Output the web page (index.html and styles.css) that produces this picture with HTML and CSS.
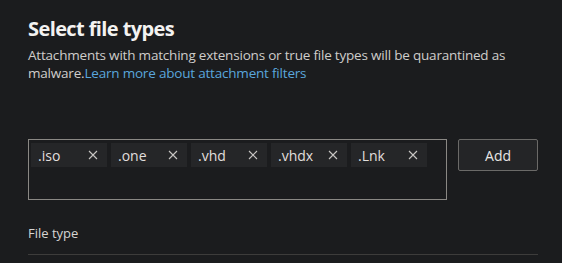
FILE: index.html
```html
<!DOCTYPE html>
<html lang="en">
<head>
    <meta charset="UTF-8">
    <meta name="viewport" content="width=device-width, initial-scale=1.0">
    <title>Select file types</title>
    <link rel="stylesheet" href="styles.css">
</head>
<body>

<main class='panel'>
    <h1 class='title'>Select file types</h1>
    <p class='desc'>Attachments with matching extensions or true file types will be quarantined as malware.<a href='#' class='link'>Learn more about attachment filters</a></p>

    <div class='picker'>
        <div class='tagbox'>
            <span class='tag'><span class='tag-text'>.iso</span><span class='tag-x'><svg viewBox='0 0 10 10'><path d='M1 1L9 9M9 1L1 9'/></svg></span></span>
            <span class='tag'><span class='tag-text'>.one</span><span class='tag-x'><svg viewBox='0 0 10 10'><path d='M1 1L9 9M9 1L1 9'/></svg></span></span>
            <span class='tag'><span class='tag-text'>.vhd</span><span class='tag-x'><svg viewBox='0 0 10 10'><path d='M1 1L9 9M9 1L1 9'/></svg></span></span>
            <span class='tag'><span class='tag-text'>.vhdx</span><span class='tag-x'><svg viewBox='0 0 10 10'><path d='M1 1L9 9M9 1L1 9'/></svg></span></span>
            <span class='tag'><span class='tag-text'>.Lnk</span><span class='tag-x'><svg viewBox='0 0 10 10'><path d='M1 1L9 9M9 1L1 9'/></svg></span></span>
        </div>
        <button class='add-btn'>Add</button>
    </div>

    <div class='list-head'>
        <span class='col'>File type</span>
    </div>
</main>

</body>
</html>
```

FILE: styles.css
```css
*{
  margin: 0px;
  padding: 0px;
  box-sizing: border-box;
}
body{
  background-color: #1b1c1e;
  font-family: "Open Sans", "Noto Sans", sans-serif;
  color: #d6d5d3;
}
.panel{
  padding: 15px 24px 0 28px;
}
.title{
  font-size: 20px;
  line-height: 28px;
  font-weight: 700;
  color: #f3f2f1;
  letter-spacing: -0.6px;
}
.desc{
  font-size: 13.5px;
  line-height: 18px;
  max-width: 500px;
  margin-top: 3px;
  letter-spacing: -0.2px;
  color: #cfcdcb;
}
.link{
  color: #5aa6dc;
  text-decoration: none;
}
.picker{
  display: flex;
  gap: 11px;
  margin-top: 57px;
  align-items: flex-start;
}
.tagbox{
  width: 420px;
  height: 61px;
  border: 1px solid #8a8884;
  padding: 3px 2px;
  display: flex;
  flex-wrap: wrap;
  align-content: flex-start;
  gap: 4px;
}
.tag{
  width: 76px;
  height: 24px;
  background-color: #252628;
  display: flex;
  align-items: center;
  justify-content: space-between;
  padding: 0 9px 0 7px;
  font-size: 14px;
  color: #e1dfdd;
}
.tag-x{
  width: 10px;
  height: 10px;
  display: flex;
}
.tag-x svg{
  width: 10px;
  height: 10px;
  stroke: #c8c6c4;
  stroke-width: 1.1;
  fill: none;
}
.add-btn{
  width: 80px;
  height: 32px;
  background-color: #242527;
  border: 1px solid #6b6a68;
  border-radius: 2px;
  color: #e8e6e4;
  font-family: "Open Sans", "Noto Sans", sans-serif;
  font-size: 14px;
  font-weight: 500;
}
.list-head{
  margin-top: 24px;
  width: 510px;
  height: 31px;
  border-bottom: 1px solid #3d3c3b;
  font-size: 13px;
  color: #d6d4d2;
}
```
